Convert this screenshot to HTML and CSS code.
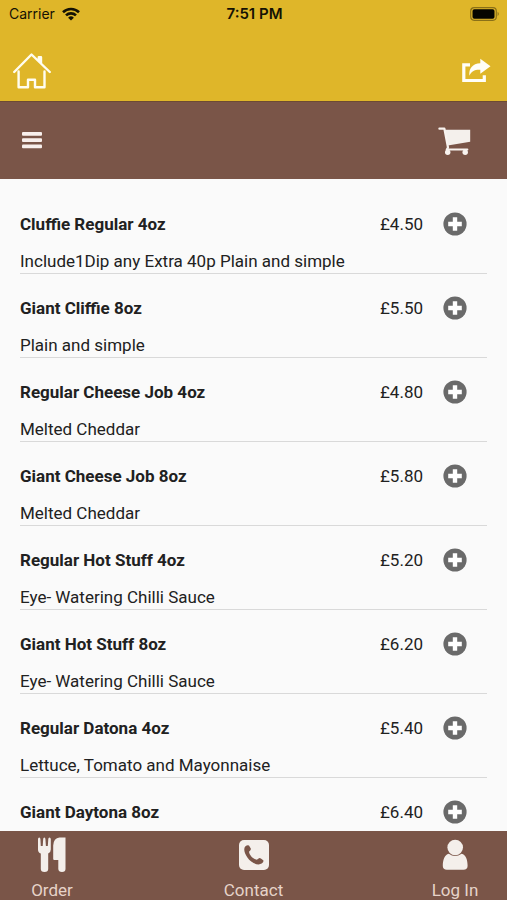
FILE: index.html
```html
<!DOCTYPE html>
<html lang="en">
<head>
<meta charset="utf-8">
<meta name="viewport" content="width=device-width, initial-scale=1">
<title>Menu</title>
<link rel="stylesheet" href="styles.css">
</head>
<body>
<header>
  <div class="status">
    <span class="carrier">Carrier
      <svg width="18" height="14" viewBox="0 0 18 14" fill="none" stroke="#151204" stroke-width="2.6" aria-hidden="true"><path d="M1 5.2a11.5 11.5 0 0 1 16 0M4 8.4a7.2 7.2 0 0 1 10 0"/><path d="M9 13.6 6.1 10.7a4.2 4.2 0 0 1 5.8 0z" fill="#151204" stroke="none"/></svg>
    </span>
    <span class="time">7:51 PM</span>
    <svg class="battery" width="30" height="14" viewBox="0 0 30 14" aria-hidden="true"><rect x=".7" y=".7" width="25.6" height="12.6" rx="3.5" fill="none" stroke="#8a7018" stroke-width="1.2"/><rect x="2.5" y="2.3" width="22" height="9.4" rx="1.8" fill="#050500"/><path d="M27.6 4.8q2.4 2.2 0 4.4z" fill="#8a7018"/></svg>
  </div>
  <div class="topbar">
    <button type="button" aria-label="Home">
      <svg width="38" height="36" viewBox="13 53 38 36" fill="none" stroke="#fffdf0" stroke-width="2.4" stroke-linecap="round" stroke-linejoin="round"><path d="M14.2 72 31.5 54.5 49.8 72M38.8 60.5V57.2H41V63.2M18.6 71.5V87.3H28V79.8H35V87.3H44.5V71.5"/></svg>
    </button>
    <button type="button" aria-label="Share">
      <svg width="30" height="26" viewBox="461 58 30 26"><path d="M470 64.8H463.8V80.5H484.3V75.3" fill="none" stroke="#fffef8" stroke-width="3.2"/><path d="M480.3 58.8 490.5 66.2 480.3 73.8V69.8C474.5 69.5 471.5 71.5 469.4 75.7 468.6 68.5 472.5 63.4 480.3 63.2z" fill="#fffef8"/></svg>
    </button>
  </div>
  <div class="toolbar">
    <button type="button" aria-label="Open menu">
      <svg width="20" height="18" viewBox="0 0 20 18" fill="#f8efec"><rect width="20" height="3.7" rx="1"/><rect y="6.3" width="20" height="3.7" rx="1"/><rect y="12.6" width="20" height="3.7" rx="1"/></svg>
    </button>
    <button type="button" aria-label="Basket">
      <svg width="34" height="29" viewBox="437 126 34 29"><path d="M444.8 129.8H470.2V141.8L447.8 145.6z" fill="#f4f0ec"/><path d="M439.4 128.7H444.4L448 147.5 446.8 149.5H467.3" fill="none" stroke="#f8f3ef" stroke-width="2.2" stroke-linecap="round" stroke-linejoin="round"/><circle cx="447.7" cy="152.2" r="2.7" fill="#f8f3ef"/><circle cx="465.2" cy="152.2" r="2.7" fill="#f8f3ef"/></svg>
    </button>
  </div>
</header>
<svg class="defs" aria-hidden="true"><symbol id="plus" viewBox="0 0 24 24"><circle cx="12" cy="12" r="11.6" fill="#6a6a6a"/><path d="M12 5.2V18.8M5.2 12H18.8" stroke="#fff" stroke-width="4.4"/></symbol></svg>
<main>
  <ul>
    <li><h2>Cluffie Regular 4oz</h2><span class="price">£4.50</span><button type="button" aria-label="Add Cluffie Regular 4oz"><svg width="24" height="24"><use href="#plus"/></svg></button><p>Include1Dip any Extra 40p Plain and simple</p></li>
    <li><h2>Giant Cliffie 8oz</h2><span class="price">£5.50</span><button type="button" aria-label="Add Giant Cliffie 8oz"><svg width="24" height="24"><use href="#plus"/></svg></button><p>Plain and simple</p></li>
    <li><h2>Regular Cheese Job 4oz</h2><span class="price">£4.80</span><button type="button" aria-label="Add Regular Cheese Job 4oz"><svg width="24" height="24"><use href="#plus"/></svg></button><p>Melted Cheddar</p></li>
    <li><h2>Giant Cheese Job 8oz</h2><span class="price">£5.80</span><button type="button" aria-label="Add Giant Cheese Job 8oz"><svg width="24" height="24"><use href="#plus"/></svg></button><p>Melted Cheddar</p></li>
    <li><h2>Regular Hot Stuff 4oz</h2><span class="price">£5.20</span><button type="button" aria-label="Add Regular Hot Stuff 4oz"><svg width="24" height="24"><use href="#plus"/></svg></button><p>Eye- Watering Chilli Sauce</p></li>
    <li><h2>Giant Hot Stuff 8oz</h2><span class="price">£6.20</span><button type="button" aria-label="Add Giant Hot Stuff 8oz"><svg width="24" height="24"><use href="#plus"/></svg></button><p>Eye- Watering Chilli Sauce</p></li>
    <li><h2>Regular Datona 4oz</h2><span class="price">£5.40</span><button type="button" aria-label="Add Regular Datona 4oz"><svg width="24" height="24"><use href="#plus"/></svg></button><p>Lettuce, Tomato and Mayonnaise</p></li>
    <li><h2>Giant Daytona 8oz</h2><span class="price">£6.40</span><button type="button" aria-label="Add Giant Daytona 8oz"><svg width="24" height="24"><use href="#plus"/></svg></button></li>
  </ul>
</main>
<nav>
  <a href="#order">
    <svg width="30" height="36" viewBox="37 838 30 36" fill="#f4efeb"><path d="M38 840Q38.1 838.5 39.2 838.5T40.4 840L40.8 847H42.7L43.2 840Q43.3 838.5 44.3 838.5T45.4 840L45.9 847H47.8L48.3 840Q48.4 838.5 49.5 838.5T50.8 840V850.5Q50.8 853.5 48.2 854.5V870Q48.2 873 44.5 873T40.8 870V854.5Q38 853.5 38 850.5z"/><path d="M59.5 838.5H65.5V870Q65.5 873 62 873T58.3 870V861H54.3Q53.2 861 53.2 860V846.5Q53.6 839 59.5 838.5z"/></svg>
    <span>Order</span>
  </a>
  <a href="#contact">
    <svg width="30" height="36" viewBox="239 838 30 36"><rect x="239" y="841" width="30" height="30" rx="5" fill="#f4efeb"/><path d="M245.2 847.5Q247.5 845.6 249 846.6L250.9 849.8Q251.1 850.7 249 852.7C249.5 856.3 252.9 859.7 256.8 860.8L259 859.2Q260 858.7 263.2 861.2 264.2 862.2 261.7 864.6C257.4 867.2 250.7 863.2 247.4 858.4 244.2 853.8 243.4 849.8 245.2 847.5z" fill="#7a5548"/></svg>
    <span>Contact</span>
  </a>
  <a href="#login">
    <svg width="30" height="36" viewBox="440 838 30 36" fill="#f4efeb"><circle cx="455.2" cy="848.5" r="7.8"/><path d="M448.8 854.7Q455 859.2 461.6 854.7C466 855.8 467.6 861 467.6 867Q467.4 870.8 463.5 870.8H446.8Q443 870.8 442.8 867C442.8 861 444.5 855.8 448.8 854.7z"/></svg>
    <span>Log In</span>
  </a>
</nav>
</body>
</html>
```
FILE: styles.css
```css
* { box-sizing: border-box; margin: 0; padding: 0; }

body {
  display: flex;
  flex-direction: column;
  height: 100vh;
  overflow: hidden;
  background: #fafafa;
  color: #212121;
  font: 17px/24px Roboto, sans-serif;
}

button {
  display: flex;
  border: 0;
  background: none;
  cursor: pointer;
}

svg { display: block; flex: none; }
.defs { position: absolute; width: 0; height: 0; }

header { flex: none; background: #dfb629; }

.status {
  display: grid;
  grid-template-columns: 1fr auto 1fr;
  align-items: center;
  height: 28px;
  padding: 0 7px 0 9px;
  color: #151204;
  font: 14px/20px Inter, sans-serif;
}
.carrier { display: flex; align-items: center; gap: 7px; }
.time { font-size: 15px; font-weight: 600; }
.battery { justify-self: end; }

.topbar, .toolbar {
  display: flex;
  align-items: center;
  justify-content: space-between;
}
.topbar { height: 73px; padding: 12px 16px 0 13px; }
.toolbar {
  height: 78px;
  padding: 0 36px 0 22px;
  background: #7a5548;
  border-top: 1px solid #6d4a34;
}

main { flex: 1; min-height: 0; overflow: hidden; padding: 11px 20px 0; }
ul { list-style: none; }
li {
  display: grid;
  grid-template-columns: 1fr auto 24px;
  column-gap: 20px;
  row-gap: 13px;
  align-items: center;
  align-content: start;
  min-height: 84px;
  padding: 22px 20px 0 0;
  border-bottom: 1px solid #d9d9d9;
}
h2 { font-size: 17px; line-height: 24px; font-weight: 700; }
p { grid-column: 1 / -1; }

nav {
  flex: none;
  display: flex;
  justify-content: space-between;
  padding: 6px 20px 0;
  height: 69px;
  background: #7a5548;
}
nav a {
  display: flex;
  flex-direction: column;
  align-items: center;
  gap: 5px;
  min-width: 64px;
  color: #e6d3c9;
  text-decoration: none;
}
```
